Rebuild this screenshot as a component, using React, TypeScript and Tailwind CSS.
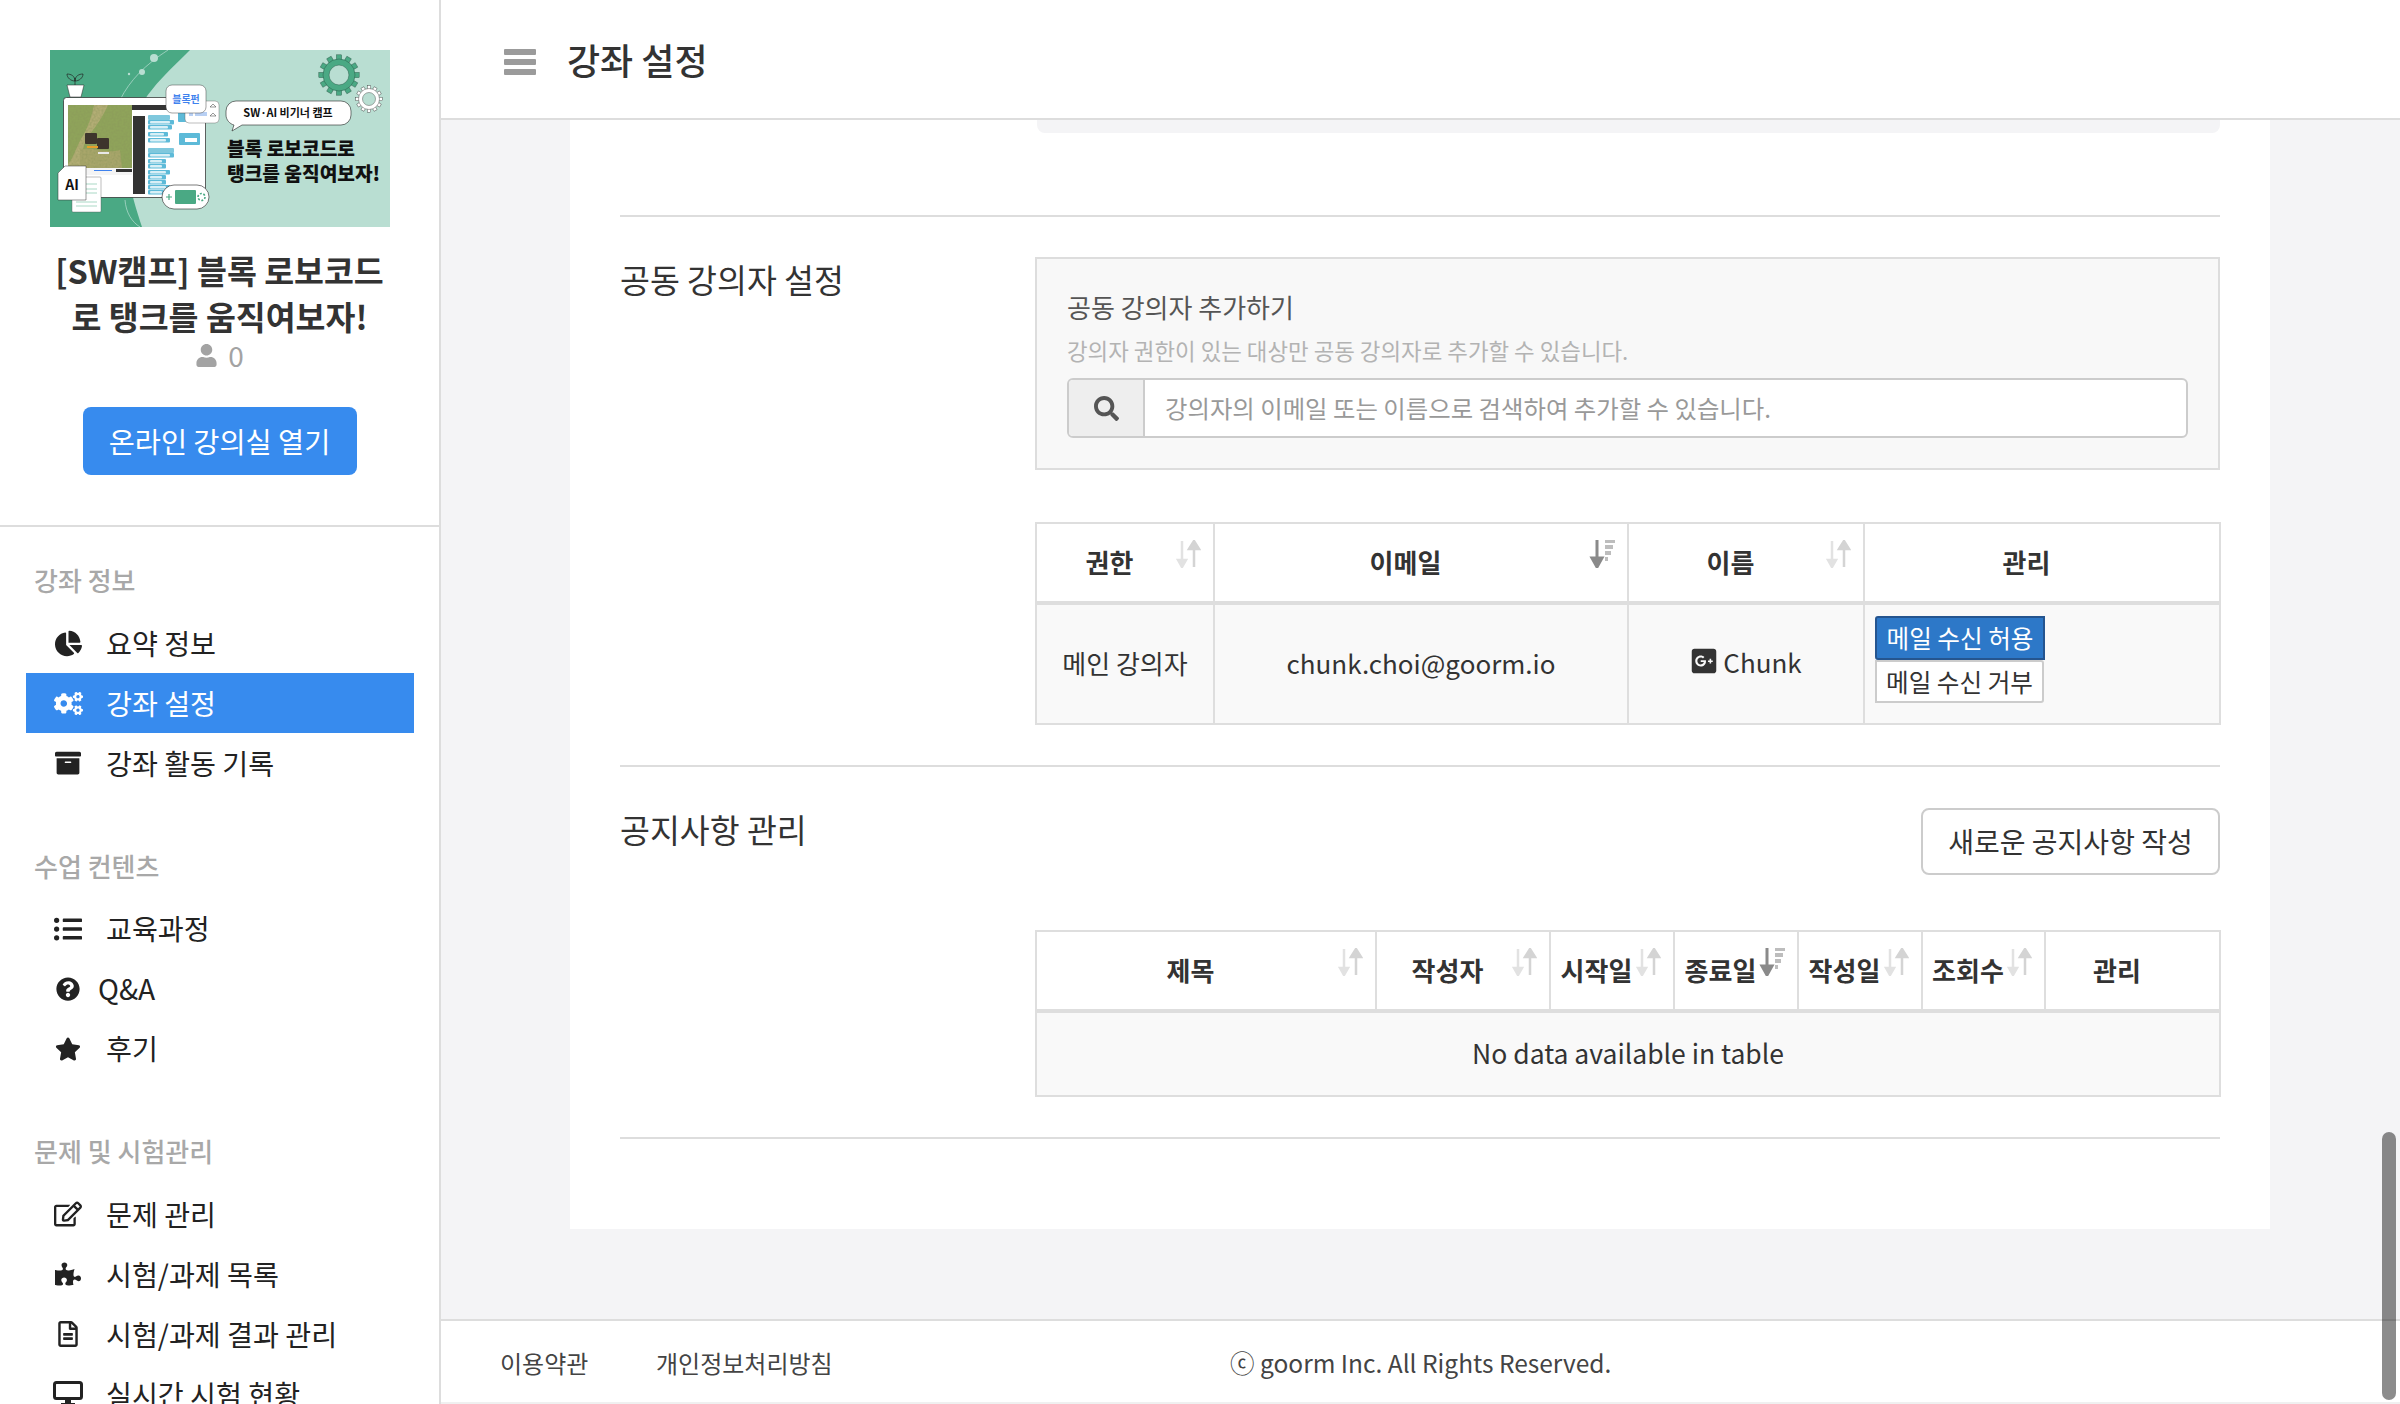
import {
  FaArchive,
  FaChartPie,
  FaCogs,
  FaGooglePlusSquare,
  FaListUl,
  FaPuzzlePiece,
  FaQuestionCircle,
  FaRegEdit,
  FaRegFileAlt,
  FaSearch,
  FaStar,
  FaUser,
} from "react-icons/fa";
import type { ReactNode } from "react";

function Monitor() {
  return (
    <svg viewBox="0 0 30 26" className="w-[30px] h-[26px]">
      <rect x="1.5" y="1.5" width="27" height="16" rx="2" fill="none" stroke="#222" strokeWidth="3" />
      <rect x="12" y="18" width="6" height="5" fill="#222" />
      <rect x="8" y="22" width="14" height="3" fill="#222" />
    </svg>
  );
}

type NavItem = { label: string; icon: ReactNode; active?: boolean; tight?: boolean };

const navGroups: { title: string; items: NavItem[] }[] = [
  {
    title: "강좌 정보",
    items: [
      { label: "요약 정보", icon: <FaChartPie className="text-[27px]" /> },
      { label: "강좌 설정", icon: <FaCogs className="text-[29px]" />, active: true },
      { label: "강좌 활동 기록", icon: <FaArchive className="text-[26px]" /> },
    ],
  },
  {
    title: "수업 컨텐츠",
    items: [
      { label: "교육과정", icon: <FaListUl className="text-[28px]" /> },
      { label: "Q&A", icon: <FaQuestionCircle className="text-[24px]" />, tight: true },
      { label: "후기", icon: <FaStar className="text-[26px]" /> },
    ],
  },
  {
    title: "문제 및 시험관리",
    items: [
      { label: "문제 관리", icon: <FaRegEdit className="text-[28px]" /> },
      { label: "시험/과제 목록", icon: <FaPuzzlePiece className="text-[26px]" /> },
      { label: "시험/과제 결과 관리", icon: <FaRegFileAlt className="text-[26px]" /> },
      { label: "실시간 시험 현황", icon: <Monitor /> },
    ],
  },
];

function Gear({ cx, cy, r, fill, stroke }: { cx: number; cy: number; r: number; fill: string; stroke: string }) {
  const teeth = Array.from({ length: 12 }, (_, i) => (i * 360) / 12);
  return (
    <g>
      {teeth.map((a) => (
        <rect
          key={a}
          x={cx - r * 0.16}
          y={cy - r * 1.26}
          width={r * 0.32}
          height={r * 0.4}
          fill={fill}
          stroke={stroke}
          strokeWidth="0.4"
          transform={`rotate(${a} ${cx} ${cy})`}
        />
      ))}
      <circle cx={cx} cy={cy} r={r} fill={fill} stroke={stroke} strokeWidth="0.4" />
      <circle cx={cx} cy={cy} r={r * 0.62} fill="#b9ded2" stroke={stroke} strokeWidth="0.4" />
    </g>
  );
}

function Banner() {
  // x, y, width of the code blocks in the editor
  const blocks = [
    [98, 70, 26],
    [98, 75, 24],
    [98, 82, 20],
    [98, 88, 22],
    [98, 103, 26],
    [98, 109, 18],
    [98, 114, 18],
    [98, 120, 22],
    [98, 125, 18],
    [98, 130, 18],
    [98, 135, 22],
    [98, 140, 18],
  ];
  return (
    <svg viewBox="0 0 340 177" className="block w-[340px] h-[177px]">
      <defs>
        <filter id="grass" x="0" y="0" width="100%" height="100%">
          <feTurbulence type="fractalNoise" baseFrequency="0.5" numOctaves="2" result="n" />
          <feColorMatrix in="n" values="0 0 0 0 0.25 0 0 0 0 0.3 0 0 0 0 0.1 0 0 0 0.9 -0.25" result="t" />
          <feMerge>
            <feMergeNode in="SourceGraphic" />
            <feMergeNode in="t" />
          </feMerge>
        </filter>
      </defs>
      <rect width="340" height="177" fill="#4aa984" />
      <path d="M140 0H340V177H92C80 140 75 120 78 90C85 50 115 25 140 0Z" fill="#b9ded2" />
      <path d="M118 0C95 15 80 30 70 50M75 150C76 163 82 172 90 177" fill="none" stroke="#b9ded2" strokeWidth="0.7" />
      <circle cx="104" cy="8" r="4" fill="#b9ded2" />
      <circle cx="92" cy="22" r="3" fill="#b9ded2" />
      <circle cx="79" cy="24" r="1.2" fill="#b9ded2" />
      <path d="M25 35V28M25 31C21 31 17 28 17 24C21 24 25 26 25 31M25 31C29 31 33 28 33 24C29 24 25 26 25 31" fill="#4aa984" stroke="#222" strokeWidth="0.7" />
      <path d="M17 35H34L31 47H20Z" fill="#fff" stroke="#222" strokeWidth="0.5" />
      <rect x="13.5" y="47.5" width="142" height="100" rx="3" fill="#fff" stroke="#222" strokeWidth="0.7" />
      <g filter="url(#grass)">
        <rect x="18" y="55" width="64" height="63" fill="#8fa45a" />
        <path d="M30 118C34 108 30 96 40 84C48 74 54 64 58 55H44C42 66 38 76 34 84C26 96 24 108 18 114V118Z" fill="#b3ad75" />
        <path d="M30 100C40 96 56 104 70 100L72 118H30Z" fill="#a9a66a" />
      </g>
      <rect x="35" y="83" width="12" height="11" rx="1" fill="#3d352c" />
      <rect x="47" y="88" width="12" height="11" rx="1" fill="#3d352c" />
      <rect x="37" y="96" width="11" height="2" fill="#e69f2a" />
      <rect x="48" y="102" width="11" height="2" fill="#e8e8e8" />
      <rect x="18" y="118" width="64" height="7" fill="#f4f4f4" />
      <rect x="44" y="120" width="18" height="1" fill="#3f82ee" />
      <rect x="66" y="119" width="16" height="3" fill="#333" />
      <rect x="82" y="55" width="72" height="5" fill="#333" />
      <rect x="83" y="66" width="12" height="78" fill="#333" />
      <rect x="98" y="65" width="22" height="5" rx="1" fill="#7fc8dd" />
      <rect x="98" y="98" width="26" height="5" rx="1" fill="#7fc8dd" />
      <rect x="128" y="60" width="22" height="12" rx="1" fill="#5dbad8" />
      <rect x="129" y="83" width="21" height="12" rx="1" fill="#5dbad8" />
      <rect x="135" y="88" width="12" height="4" fill="#fff" />
      {blocks.map(([x, y, w]) => (
        <g key={y}>
          <rect x={x} y={y} width={w} height={4.5} rx="1" fill="#5dbad8" />
          <rect x={x + 2} y={y + 1} width={w - 6} height={2.5} rx="1" fill="#d8eff6" />
        </g>
      ))}
      <rect x="135" y="51" width="34" height="22" rx="4" fill="#fff" stroke="#555" strokeWidth="0.4" />
      <rect x="139" y="62" width="4" height="4" fill="#b8d0f4" />
      <rect x="145" y="62" width="12" height="4" fill="#b8d0f4" />
      <path d="M160 57L163 54L166 57Z M160 66L163 63L166 66Z" fill="#fff" stroke="#333" strokeWidth="0.5" />
      <rect x="116" y="35" width="40" height="28" rx="6" fill="#fff" stroke="#444" strokeWidth="0.5" />
      <text x="136" y="53" textAnchor="middle" fontSize="10" fontWeight="700" fill="#3f82ee">블록펀</text>
      <rect x="22" y="127" width="29" height="35" rx="1" fill="#fff" stroke="#555" strokeWidth="0.4" />
      <path d="M36 134H47M36 139H47M36 143H47M26 152H47M26 156H47" stroke="#a9d8c5" strokeWidth="1" />
      <path d="M15 116H36V150H8V123Z" fill="#fff" stroke="#333" strokeWidth="0.5" />
      <text x="22" y="140" textAnchor="middle" fontSize="14" fontWeight="700" fill="#111">AI</text>
      <rect x="112" y="135" width="47" height="24" rx="12" fill="#fff" stroke="#222" strokeWidth="0.6" />
      <rect x="125" y="140" width="21" height="14" rx="1" fill="#4aa984" />
      <path d="M116 147H122M119 144V150" stroke="#4aa984" strokeWidth="1.2" />
      <circle cx="151.5" cy="147" r="3.5" fill="none" stroke="#4aa984" strokeWidth="1.6" strokeDasharray="2 1.6" />
      <path d="M186 51H291A10 10 0 0 1 301 61V65A10 10 0 0 1 291 75H192L182 81L184 75C180 74 176 70 176 65V61A10 10 0 0 1 186 51Z" fill="#fff" stroke="#222" strokeWidth="0.6" />
      <text x="238" y="67" textAnchor="middle" fontSize="11" fontWeight="700" fill="#111">SW·AI 비기너 캠프</text>
      <text x="177" y="106" fontSize="19.2" fontWeight="900" fill="#111">블록 로보코드로</text>
      <text x="177" y="131" fontSize="19.2" fontWeight="900" fill="#111">탱크를 움직여보자!</text>
      <Gear cx={289} cy={25} r={16} fill="#4aa984" stroke="#1f4a3a" />
      <Gear cx={319} cy={49} r={10.5} fill="#fff" stroke="#333" />
    </svg>
  );
}

function SortIcon({ active }: { active?: boolean }) {
  if (active) {
    return (
      <svg viewBox="0 0 26 28" className="absolute right-[12px] top-[16px] w-[26px] h-[28px]">
        <path d="M8 0V20M3 18L8 27L13 18Z" stroke="#8a8a8a" fill="#8a8a8a" strokeWidth="3" />
        <path d="M16 1H26M16 7H24M16 13H22M16 19H19" stroke="#bdbdbd" strokeWidth="4" />
      </svg>
    );
  }
  return (
    <svg viewBox="0 0 26 28" className="absolute right-[12px] top-[16px] w-[26px] h-[28px]">
      <path d="M7 1V20M3 20L7 27L11 20Z" stroke="#e2e2e2" fill="#e2e2e2" strokeWidth="2.5" />
      <path d="M19 27V8M14 9L19 1L24 9Z" stroke="#d4d4d4" fill="#d4d4d4" strokeWidth="2.5" />
    </svg>
  );
}

function Th({ label, width, sort, active }: { label: string; width: string; sort?: boolean; active?: boolean }) {
  return (
    <th
      className={`relative h-[80px] border-2 border-b-4 border-[#dedede] bg-white pb-[2px] pl-[4px] pr-[35px] text-center text-[26px] font-bold text-[#333] ${width}`}
    >
      {label}
      {sort && <SortIcon active={active} />}
    </th>
  );
}

export default function App() {
  return (
    <div className="flex h-screen w-screen overflow-hidden bg-white font-['Noto_Sans_CJK_KR','Noto_Sans',sans-serif] text-[#333]">
      <aside className="w-[441px] shrink-0 border-r-2 border-[#dddddd] bg-white overflow-hidden">
        <div className="flex h-[527px] flex-col items-center border-b-2 border-[#dddddd] pt-[50px]">
          <Banner />
          <h1 className="mt-[20px] w-[340px] text-center text-[32.5px] leading-[46px] font-bold">
            [SW캠프] 블록 로보코드
            <br />로 탱크를 움직여보자!
          </h1>
          <div className="flex items-center gap-[10px] text-[28px] leading-[32px] text-[#a3a3a3]">
            <FaUser className="text-[23px]" />
            <span>0</span>
          </div>
          <button className="mt-[36px] h-[68px] w-[274px] rounded-[8px] bg-[#378bee] text-[28.4px] text-white">
            온라인 강의실 열기
          </button>
        </div>
        <nav className="pt-[33px]">
          {navGroups.map((group) => (
            <div key={group.title} className="mb-[52.5px]">
              <div className="pl-[34px] text-[26px] leading-[40px] font-medium text-[#a8a8a8]">{group.title}</div>
              <ul className="mt-[13px]">
                {group.items.map((item) => (
                  <li
                    key={item.label}
                    className={`ml-[26px] flex h-[60px] w-[388px] items-center text-[28.2px] ${
                      item.active ? "bg-[#378bee] text-white" : "text-[#222]"
                    }`}
                  >
                    <span className="flex w-[80px] shrink-0 justify-center pl-[4px]">{item.icon}</span>
                    <span className={item.tight ? "-ml-[8px]" : ""}>{item.label}</span>
                  </li>
                ))}
              </ul>
            </div>
          ))}
        </nav>
      </aside>

      <main className="relative flex min-w-0 flex-1 flex-col">
        <header className="flex h-[120px] shrink-0 items-center gap-[31px] border-b-2 border-[#dddddd] bg-white pl-[63px]">
          <div className="mt-[6px] flex w-[32px] flex-col gap-[4px]">
            <span className="h-[6px] rounded-[1px] bg-[#9b9b9b]" />
            <span className="h-[6px] rounded-[1px] bg-[#9b9b9b]" />
            <span className="h-[6px] rounded-[1px] bg-[#9b9b9b]" />
          </div>
          <h2 className="text-[36px] font-medium text-[#333]">강좌 설정</h2>
        </header>

        <div className="flex-1 overflow-hidden bg-[#f4f4f6] pl-[129px]">
          <div className="h-[1109px] w-[1700px] bg-white px-[50px]">
            <div className="ml-[417px] h-[13px] w-[1183px] rounded-b-[8px] bg-[#f4f4f6]" />

            <div className="mt-[82px] h-[2px] bg-[#dddddd]" />

            <section className="mt-[40px] flex">
              <h3 className="w-[415px] shrink-0 pt-[1px] text-[32.5px] leading-[42px] text-[#333]">공동 강의자 설정</h3>
              <div className="min-w-0 flex-1">
                <div className="h-[213px] border-2 border-[#dddddd] bg-[#f8f8f8] px-[30px] pt-[30px]">
                  <div className="text-[26px] leading-[36px] text-[#555]">공동 강의자 추가하기</div>
                  <div className="mt-[9px] text-[22.4px] leading-[32px] text-[#b3b3b3]">
                    강의자 권한이 있는 대상만 공동 강의자로 추가할 수 있습니다.
                  </div>
                  <div className="mt-[12px] flex h-[60px] overflow-hidden rounded-[6px] border-2 border-[#cccccc] bg-white">
                    <div className="flex w-[76px] shrink-0 items-center justify-center border-r-2 border-[#cccccc] bg-[#eeeeee]">
                      <FaSearch className="text-[25px] text-[#555]" />
                    </div>
                    <div className="flex items-center pl-[20px] text-[24.4px] text-[#999]">
                      강의자의 이메일 또는 이름으로 검색하여 추가할 수 있습니다.
                    </div>
                  </div>
                </div>

                <table className="mt-[52px] w-full table-fixed border-collapse">
                  <thead>
                    <tr>
                      <Th label="권한" width="w-[178px]" sort />
                      <Th label="이메일" width="w-[414px]" sort active />
                      <Th label="이름" width="w-[236px]" sort />
                      <Th label="관리" width="w-[356px]" />
                    </tr>
                  </thead>
                  <tbody>
                    <tr className="h-[121px] bg-[#f9f9f9] text-center text-[26px] text-[#333]">
                      <td className="border-2 border-[#dedede] pb-[3px]">메인 강의자</td>
                      <td className="border-2 border-[#dedede] pb-[3px]">chunk.choi@goorm.io</td>
                      <td className="border-2 border-[#dedede] pb-[3px]">
                        <span className="inline-flex items-center gap-[5px]">
                          <FaGooglePlusSquare className="text-[28px] text-[#333]" />
                          Chunk
                        </span>
                      </td>
                      <td className="border-2 border-[#dedede] pl-[10px] text-left">
                        <div className="flex flex-col items-start pb-[10px]">
                          <button className="h-[44px] w-[170px] rounded-l-[3px] border-2 border-[#25558f] bg-[#2d78c8] text-[24.6px] text-white">
                            메일 수신 허용
                          </button>
                          <button className="h-[43px] w-[169px] rounded-r-[3px] border-2 border-[#cccccc] bg-white text-[24.6px] text-[#333]">
                            메일 수신 거부
                          </button>
                        </div>
                      </td>
                    </tr>
                  </tbody>
                </table>
              </div>
            </section>

            <div className="mt-[40px] h-[2px] bg-[#dddddd]" />

            <section className="mt-[41px] flex">
              <h3 className="w-[415px] shrink-0 text-[32.5px] leading-[42px] text-[#333]">공지사항 관리</h3>
              <div className="min-w-0 flex-1">
                <div className="flex justify-end">
                  <button className="h-[67px] w-[299px] rounded-[8px] border-2 border-[#cccccc] bg-white pb-[2px] text-[28px] text-[#333]">
                    새로운 공지사항 작성
                  </button>
                </div>
                <table className="mt-[55px] w-full table-fixed border-collapse">
                  <thead>
                    <tr>
                      <Th label="제목" width="w-[340px]" sort />
                      <Th label="작성자" width="w-[174px]" sort />
                      <Th label="시작일" width="w-[124px]" sort />
                      <Th label="종료일" width="w-[124px]" sort active />
                      <Th label="작성일" width="w-[124px]" sort />
                      <Th label="조회수" width="w-[123px]" sort />
                      <Th label="관리" width="w-[175px]" />
                    </tr>
                  </thead>
                  <tbody>
                    <tr className="h-[85px] bg-[#f9f9f9]">
                      <td colSpan={7} className="border-2 border-[#dedede] pb-[2px] text-center text-[26.5px] text-[#333]">
                        No data available in table
                      </td>
                    </tr>
                  </tbody>
                </table>
              </div>
            </section>

            <div className="mt-[40px] h-[2px] bg-[#dddddd]" />
          </div>
        </div>

        <footer className="flex h-[85px] shrink-0 items-center border-t-2 border-b-2 border-t-[#dddddd] border-b-[#f0f0f0] bg-white pl-[59px] pt-[3px] text-[24px] text-[#444]">
          <a className="w-[156px]">이용약관</a>
          <a className="w-[574px]">개인정보처리방침</a>
          <span className="text-[24.5px]">ⓒ goorm Inc. All Rights Reserved.</span>
        </footer>

        <div className="absolute right-[4px] top-[1132px] h-[268px] w-[14px] rounded-full bg-black/45" />
      </main>
    </div>
  );
}
